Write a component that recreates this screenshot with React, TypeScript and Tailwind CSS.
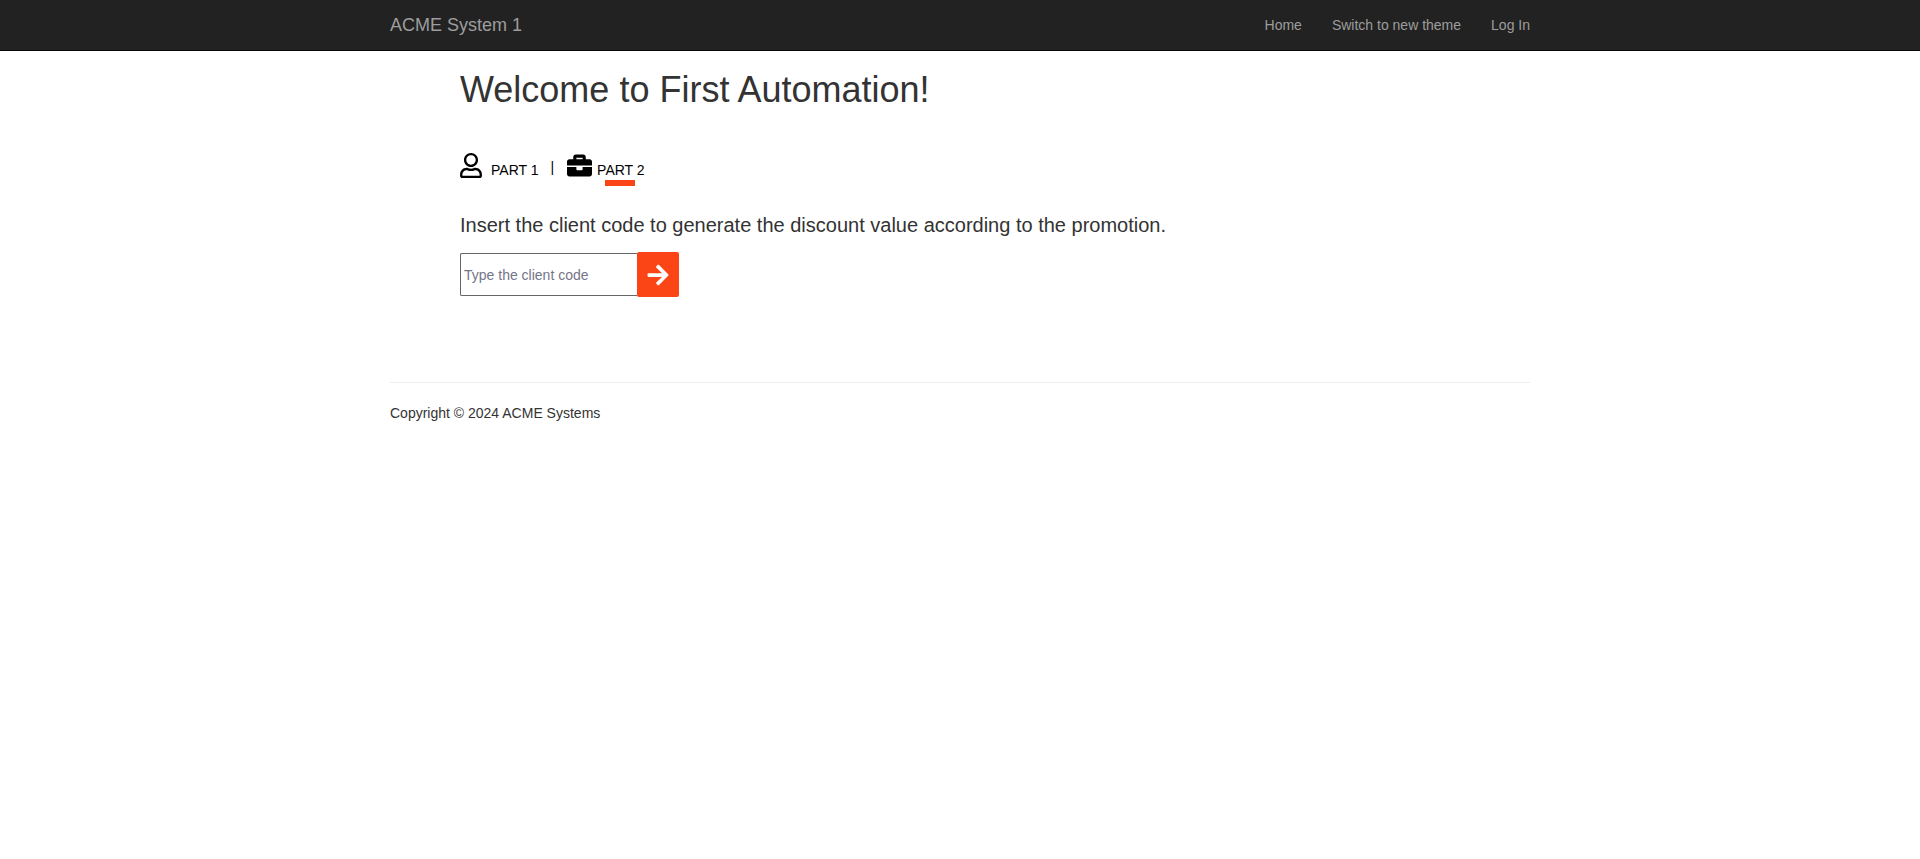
import { FaRegUser, FaBriefcase, FaArrowRight } from "react-icons/fa";

export default function App() {
  return (
    <div className="bg-white font-['Liberation_Sans',Arial,sans-serif] text-sm leading-5 text-[#333]">
      <header className="border-b border-[#080808] bg-[#222]">
        <div className="mx-auto flex w-full max-w-[1140px] items-center justify-between text-[#9d9d9d]">
          <a href="#" className="py-[15px] text-lg leading-5">ACME System 1</a>
          <nav className="flex gap-[30px]">
            <a href="#" className="py-[15px]">Home</a>
            <a href="#" className="py-[15px]">Switch to new theme</a>
            <a href="#" className="py-[15px]">Log In</a>
          </nav>
        </div>
      </header>
      <div className="mx-auto w-full max-w-[1140px]">
        <main className="px-[70px] pt-[19px]">
          <h1 className="text-4xl leading-10">Welcome to First Automation!</h1>
          <div className="mt-[43px] flex items-start text-black">
            <a href="#" className="flex items-start gap-[9px]">
              <FaRegUser className="h-[25px] w-[22px]" />
              <span className="pt-[7px]">PART 1</span>
            </a>
            <span className="mr-[13px] ml-3 mt-1">|</span>
            <a href="#" className="flex flex-col items-center">
              <span className="flex items-start gap-[5px]">
                <FaBriefcase className="h-[25px] w-[25px]" />
                <span className="pt-[7px]">PART 2</span>
              </span>
              <span className="ml-7 h-[6px] w-[30px] bg-[#fc4516]" />
            </a>
          </div>
          <label htmlFor="code" className="mt-[27px] block text-xl leading-6">
            Insert the client code to generate the discount value according to the promotion.
          </label>
          <form className="mt-[15px] flex items-center">
            <input id="code" type="text" placeholder="Type the client code" className="h-[43px] w-[177px] rounded-l-xs border border-r-0 border-[#666] px-[3px] placeholder:text-[#757588]" />
            <button type="button" aria-label="Submit" className="flex h-[45px] w-[42px] items-center justify-center rounded-xs bg-[#fc4516] text-white">
              <FaArrowRight className="h-6 w-6" />
            </button>
          </form>
        </main>
        <hr className="mt-[85px] border-[#eee]" />
        <footer className="pt-5">Copyright © 2024 ACME Systems</footer>
      </div>
    </div>
  );
}
